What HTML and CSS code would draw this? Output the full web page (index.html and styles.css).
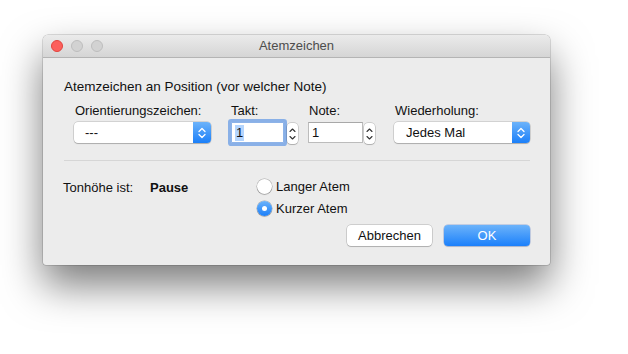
FILE: index.html
```html
<!DOCTYPE html>
<html lang="de">
<head>
<meta charset="utf-8">
<title>Atemzeichen</title>
<link rel="stylesheet" href="styles.css">
</head>
<body>
<div class="window">
  <div class="titlebar">
    <div class="lights">
      <span class="light red"></span>
      <span class="light gray"></span>
      <span class="light gray"></span>
    </div>
    <div class="title">Atemzeichen</div>
  </div>
  <div class="content">
    <div class="heading">Atemzeichen an Position (vor welcher Note)</div>
    <div class="fields">
      <div class="group g-orient">
        <div class="label">Orientierungszeichen:</div>
        <div class="popup">
          <span class="popup-text">---</span>
          <span class="popup-arrows">
            <svg width="8" height="12" viewBox="0 0 8 12"><path d="M1 4.5 L4 1.5 L7 4.5 M1 7.5 L4 10.5 L7 7.5" fill="none" stroke="#fff" stroke-width="1.3" stroke-linecap="round" stroke-linejoin="round"/></svg>
          </span>
        </div>
      </div>
      <div class="group g-takt">
        <div class="label">Takt:</div>
        <div class="input-row">
          <div class="field focused"><span class="sel">1</span></div>
          <div class="stepper">
            <svg width="7" height="16" viewBox="0 0 7 16"><path d="M1 5.5 L3.5 3 L6 5.5 M1 10.5 L3.5 13 L6 10.5" fill="none" stroke="#333" stroke-width="1.1" stroke-linecap="round" stroke-linejoin="round"/></svg>
          </div>
        </div>
      </div>
      <div class="group g-note">
        <div class="label">Note:</div>
        <div class="input-row">
          <div class="field">1</div>
          <div class="stepper">
            <svg width="7" height="16" viewBox="0 0 7 16"><path d="M1 5.5 L3.5 3 L6 5.5 M1 10.5 L3.5 13 L6 10.5" fill="none" stroke="#333" stroke-width="1.1" stroke-linecap="round" stroke-linejoin="round"/></svg>
          </div>
        </div>
      </div>
      <div class="group g-wied">
        <div class="label">Wiederholung:</div>
        <div class="popup">
          <span class="popup-text">Jedes Mal</span>
          <span class="popup-arrows">
            <svg width="8" height="12" viewBox="0 0 8 12"><path d="M1 4.5 L4 1.5 L7 4.5 M1 7.5 L4 10.5 L7 7.5" fill="none" stroke="#fff" stroke-width="1.3" stroke-linecap="round" stroke-linejoin="round"/></svg>
          </span>
        </div>
      </div>
    </div>
    <div class="separator"></div>
    <div class="lower">
      <div class="pitch">
        <span class="pitch-label">Tonhöhe ist:</span><span class="pitch-value">Pause</span>
      </div>
      <div class="radios">
        <div class="radio-row"><span class="radio"></span><span>Langer Atem</span></div>
        <div class="radio-row"><span class="radio on"></span><span>Kurzer Atem</span></div>
      </div>
    </div>
    <div class="buttons">
      <div class="btn">Abbrechen</div>
      <div class="btn default">OK</div>
    </div>
  </div>
</div>
</body>
</html>
```
FILE: styles.css
```css
html, body {
  margin: 0;
  padding: 0;
  background: #ffffff;
}
body {
  min-height: 354px;
  box-sizing: border-box;
  padding: 35px 0 0 43px;
  font-family: "Liberation Sans", Arial, sans-serif;
  font-size: 13px;
  color: #111;
}
.window {
  width: 507px;
  height: 230px;
  background: #ececec;
  border-radius: 5px 5px 3px 3px;
  box-shadow: 0 0 0 0.5px rgba(0,0,0,0.25), 0 20px 40px 0 rgba(0,0,0,0.52);
  overflow: hidden;
  box-sizing: border-box;
}
.titlebar {
  height: 22px;
  border-bottom: 1px solid #b4b4b4;
  background: linear-gradient(#ebebeb, #d5d5d5);
  display: flex;
  align-items: center;
  position: relative;
}
.lights {
  display: flex;
  gap: 8px;
  padding-left: 8px;
}
.light {
  width: 12px;
  height: 12px;
  border-radius: 50%;
  box-sizing: border-box;
}
.light.red {
  background: #fc605c;
  border: 0.5px solid #e0443e;
}
.light.gray {
  background: #d2d2d2;
  border: 0.5px solid #bdbdbd;
}
.title {
  position: absolute;
  left: 0;
  right: 0;
  text-align: center;
  color: #4d4d4d;
  font-size: 13px;
  line-height: 22px;
  pointer-events: none;
}
.content {
  padding: 21px 20px 0 21px;
}
.heading {
  line-height: 16px;
  font-size: 13.5px;
}
.fields {
  display: flex;
  margin-top: 8px;
  padding-left: 10px;
}
.group {
  display: flex;
  flex-direction: column;
}
.label {
  line-height: 16px;
  margin-bottom: 3px;
}
.g-orient { width: 137px; }
.g-orient .label { padding-left: 1px; }
.g-takt { width: 67px; margin-left: 20px; }
.g-note { width: 68px; margin-left: 10px; }
.g-note .label { padding-left: 1px; }
.g-wied { width: 136px; margin-left: 18px; }
.g-wied .label { padding-left: 1px; }

.popup {
  height: 21px;
  box-sizing: border-box;
  background: #fff;
  border-radius: 4px;
  box-shadow: 0 0 0 0.5px rgba(0,0,0,0.22), 0 1px 1px rgba(0,0,0,0.18);
  display: flex;
  align-items: center;
  overflow: hidden;
}
.popup-text {
  flex: 1;
  padding-left: 12px;
  line-height: 21px;
}
.g-orient .popup-text { padding-left: 11px; }
.popup-arrows {
  width: 18px;
  height: 21px;
  background: linear-gradient(#6cb3fa, #1b7ff9);
  display: flex;
  align-items: center;
  justify-content: center;
}
.input-row {
  display: flex;
  align-items: flex-start;
}
.field {
  height: 21px;
  box-sizing: border-box;
  background: #fff;
  border: 1px solid #bcbcbc;
  border-top-color: #a8a8a8;
  line-height: 19px;
  padding-left: 3px;
  display: flex;
  align-items: center;
}
.g-takt .field { width: 54px; }
.g-note .field { width: 55px; }
.field.focused {
  border-color: #8db3e8;
  box-shadow: 0 0 0 3px rgba(120, 166, 230, 0.85);
  border-radius: 1px;
}
.sel {
  background: #b4d5fe;
  line-height: 16px;
  padding: 0 1px;
}
.stepper {
  width: 11px;
  height: 21px;
  margin-left: 3px;
  margin-top: 1px;
  background: #fff;
  border-radius: 4px;
  box-shadow: 0 0 0 0.5px rgba(0,0,0,0.25), 0 1px 1px rgba(0,0,0,0.15);
  display: flex;
  align-items: center;
  justify-content: center;
}
.g-note .stepper { margin-left: 1px; }
.separator {
  height: 1px;
  background: #d6d6d6;
  margin: 16px 0 0 0;
}
.lower {
  display: flex;
  margin-top: 18px;
}
.pitch {
  width: 194px;
  margin-left: -1px;
  line-height: 15px;
  padding-top: 1px;
}
.pitch-label {
  display: inline-block;
  width: 87px;
}
.pitch-value {
  font-weight: bold;
}
.radios {
  display: flex;
  flex-direction: column;
  gap: 7px;
}
.radio-row {
  display: flex;
  align-items: center;
  gap: 4px;
  line-height: 15px;
}
.radio {
  width: 15px;
  height: 15px;
  box-sizing: border-box;
  border-radius: 50%;
  background: #fff;
  box-shadow: 0 0 0 0.5px rgba(0,0,0,0.3), 0 1px 1px rgba(0,0,0,0.15);
  position: relative;
}
.radio.on {
  background: linear-gradient(#6cb3fa, #1b7ff9);
}
.radio.on::after {
  content: "";
  position: absolute;
  left: 5px;
  top: 5px;
  width: 5px;
  height: 5px;
  border-radius: 50%;
  background: #fff;
}
.buttons {
  display: flex;
  justify-content: flex-end;
  gap: 12px;
  margin-top: 9px;
}
.btn {
  height: 21px;
  box-sizing: border-box;
  border-radius: 4px;
  background: #fff;
  box-shadow: 0 0 0 0.5px rgba(0,0,0,0.25), 0 1px 1px rgba(0,0,0,0.15);
  display: flex;
  align-items: center;
  justify-content: center;
  line-height: 21px;
  width: 85px;
}
.btn.default {
  width: 86px;
  background: linear-gradient(#6cb3fa, #1b80fb);
  color: #fff;
  box-shadow: 0 0 0 0.5px rgba(0,60,180,0.35), 0 1px 1px rgba(0,0,0,0.12);
}
```
